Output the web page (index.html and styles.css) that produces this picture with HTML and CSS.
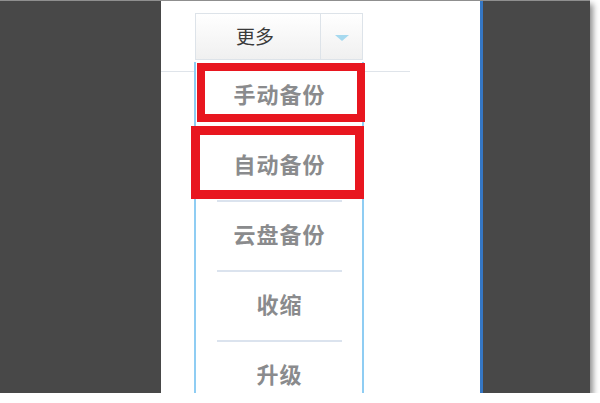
FILE: index.html
```html
<!DOCTYPE html>
<html lang="zh-CN">
<head>
    <meta charset="UTF-8">
    <meta name="viewport" content="width=device-width, initial-scale=1.0">
    <title>更多</title>
    <link rel="stylesheet" href="styles.css">
</head>
<body>
    <div class="frame">
        <div class="side"></div>

        <div class="panel">
            <!-- 顶部按钮 -->
            <div class="header">
                <div class="moreBtn">
                    <span class="moreLabel">更多</span>
                    <span class="moreArrow"><i class="tri"></i></span>
                </div>
            </div>

            <!-- 下拉菜单 -->
            <div class="menu">
                <div class="item">手动备份</div>
                <div class="item">自动备份</div>
                <div class="item">云盘备份</div>
                <div class="item">收缩</div>
                <div class="item">升级</div>
                <div class="mark markOne"></div>
                <div class="mark markTwo"></div>
            </div>
        </div>

        <div class="edge"></div>
        <div class="side"></div>
    </div>
</body>
</html>
```

FILE: styles.css
```css
body {
    margin: 0;
    background-color: #fff;
    font-family: "Noto Sans CJK SC", "Noto Sans", sans-serif;
}
.frame {
    width: 590px;
    height: 393px;
    display: grid;
    grid-template-columns: 161px 319px 3px 107px;
    border-top: 1px solid #8f8f8f;
    box-sizing: border-box;
    box-shadow: 3px 4px 6px rgba(0, 0, 0, 0.45);
    overflow: hidden;
}
.side {
    background-color: #484848;
}
.edge {
    background-color: #3577c4;
}
.panel {
    position: relative;
    background-color: #fff;
    overflow: hidden;
}
.header {
    width: 249px;
    height: 71px;
    padding: 12px 0 0 34px;
    box-sizing: border-box;
    border-bottom: 1px solid #dfe4ea;
}
.moreBtn {
    width: 168px;
    height: 47px;
    display: flex;
    box-sizing: border-box;
    border: 1px solid #dde3e9;
    background: linear-gradient(#ffffff, #f0f0f0);
}
.moreLabel {
    width: 125px;
    padding: 0 6px 3px 0;
    box-sizing: border-box;
    display: flex;
    align-items: center;
    justify-content: center;
    font-size: 19px;
    color: #3a3a3a;
    border-right: 1px solid #dde3e9;
}
.moreArrow {
    flex: 1;
    display: flex;
    align-items: center;
    justify-content: center;
}
.tri {
    width: 0;
    height: 0;
    border-left: 7px solid transparent;
    border-right: 7px solid transparent;
    border-top: 6px solid #a6d9ef;
    margin-top: 2px;
}
.menu {
    position: absolute;
    left: 33px;
    top: 61px;
    width: 170px;
    height: 400px;
    box-sizing: border-box;
    border-left: 2px solid #8fcdf3;
    border-right: 2px solid #8fcdf3;
    background-color: #fff;
}
.item {
    height: 68px;
    margin: 0 20px 0 21px;
    padding-bottom: 6px;
    box-sizing: content-box;
    height: 62px;
    display: flex;
    align-items: center;
    justify-content: center;
    font-size: 22px;
    font-weight: bold;
    letter-spacing: 1px;
    color: #8a8b8d;
    border-bottom: 2px solid #dbe3ee;
}
/* 红框标注 */
.mark {
    position: absolute;
    box-sizing: border-box;
    border: 8px solid #e8161f;
}
.markOne {
    left: 1px;
    top: 1px;
    width: 168px;
    height: 59px;
}
.markTwo {
    left: -5px;
    top: 64px;
    width: 173px;
    height: 73px;
    border-width: 9px;
}
```
